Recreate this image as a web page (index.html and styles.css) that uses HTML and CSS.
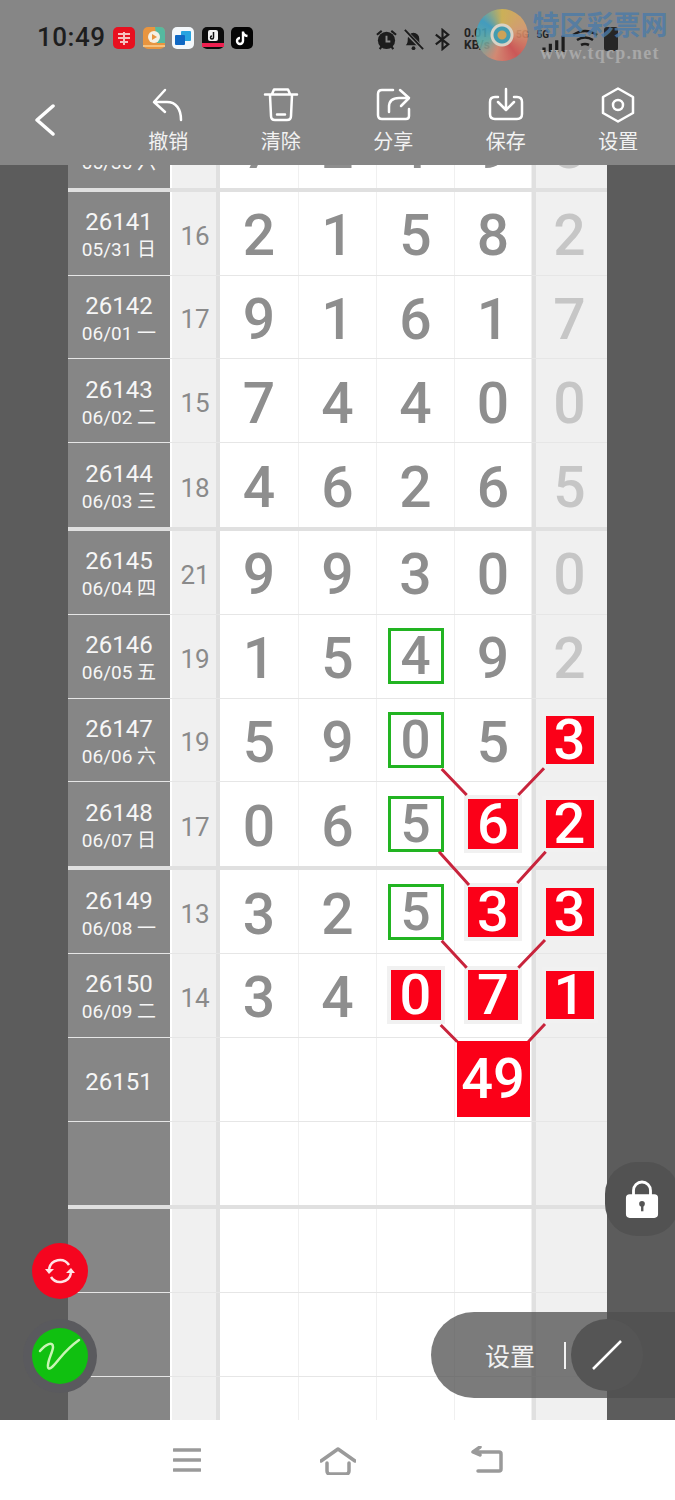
FILE: index.html
```html
<!DOCTYPE html>
<html>
<head>
    <title>排列五 走势图</title>
    <link rel="stylesheet" href="styles.css">
</head>
<body>
<div class="screen">
    <header class="top">
        <div class="status">
            <span class="time">10:49</span>
            <div class="apps">
                <svg class="app" viewBox="0 0 22 22"><rect width="22" height="22" rx="5" fill="#e8101f"/><path d="M5 7h12M5 11h12M7 15h8M11 5v13" stroke="#f6c0c0" stroke-width="2" fill="none"/></svg>
                <svg class="app" viewBox="0 0 22 22"><rect width="22" height="22" rx="5" fill="#e9953f"/><path d="M12 0h5q5 0 5 5v11h-8z" fill="#55b9a0"/><circle cx="11" cy="10" r="6" fill="#f6f0e4"/><path d="M9 7l5 3-5 3z" fill="#e9953f"/><rect y="18" width="22" height="2" fill="#f6c27e"/></svg>
                <svg class="app" viewBox="0 0 22 22"><rect width="22" height="22" rx="5" fill="#f4f8fb"/><rect x="9" y="4" width="10" height="10" rx="1" fill="#27a4e0"/><rect x="3" y="8" width="10" height="10" rx="1" fill="#0f68c4"/></svg>
                <svg class="app" viewBox="0 0 22 22"><rect width="22" height="22" rx="5" fill="#0c0c0c"/><rect x="6" y="3" width="10" height="11" rx="2" fill="#f2f2f2"/><path d="M11.500 5v5.500a1.500 1.500 0 1 1-1.500-1.500" stroke="#111" stroke-width="1.500" fill="none"/><rect y="16" width="22" height="4" fill="#ee2050"/></svg>
                <svg class="app" viewBox="0 0 22 22"><rect width="22" height="22" rx="5" fill="#050505"/><path d="M12 4.500v9.500a3 3 0 1 1-3-3M12 5q.500 3.500 4.500 4" stroke="#fff" stroke-width="2.400" fill="none"/></svg>
            </div>
            <div class="sys">
                <svg class="sys-icon" viewBox="0 0 24 24"><circle cx="12" cy="13" r="9" fill="#1c1c1c"/><path d="M12 8v6h4" stroke="#8a8a8a" stroke-width="2" fill="none"/><path d="M2 7l5-4M22 7l-5-4M5 22l2-3M19 22l-2-3" stroke="#1c1c1c" stroke-width="2.200"/></svg>
                <svg class="sys-icon" viewBox="0 0 24 24"><path d="M4 18c2-2 2-4 2-7a6 6 0 0 1 12 0c0 3 0 5 2 7z" fill="#1c1c1c"/><circle cx="12" cy="21" r="2" fill="#1c1c1c"/><path d="M3 3l18 18" stroke="#8a8a8a" stroke-width="4"/><path d="M3 2l19 20" stroke="#1c1c1c" stroke-width="2"/></svg>
                <svg class="sys-icon bt" viewBox="0 0 24 24"><path d="M5 7l13 10-6 5V2l6 5L5 17" stroke="#1c1c1c" stroke-width="2.200" fill="none"/></svg>
                <span class="speed">0.01<br>KB/s</span>
                <div class="signal"><span class="five-g">5G</span><span class="five-g">5G</span></div>
                <svg class="bars" viewBox="0 0 26 22"><path d="M2 22v-5M9 22v-9M16 22v-13M23 22V4" stroke="#1c1c1c" stroke-width="3.500"/></svg>
                <svg class="wifi" viewBox="0 0 26 20"><path d="M1 6q12-8 24 0M5 11q8-5 16 0M9 16q4-2 8 0" stroke="#1c1c1c" stroke-width="2.600" fill="none"/></svg>
                <span class="battery"></span>
            </div>
        </div>
        <nav class="toolbar">
            <svg class="back" viewBox="0 0 20 32"><path d="M18 2L2 16l16 14"/></svg>
            <div class="tools">
                <div class="tool">
                    <svg viewBox="0 0 36 36"><path d="M15 3L4 15l11 10M5 15h12c9 0 14 7 14 18"/></svg>
                    <span>撤销</span>
                </div>
                <div class="tool">
                    <svg viewBox="0 0 36 36"><path d="M2 7.500h32M9 7l2-4.500h14L27 7M7 8l1 21q0 4 4 4h12q4 0 4-4l1-21M14 27.500h8"/></svg>
                    <span>清除</span>
                </div>
                <div class="tool">
                    <svg viewBox="0 0 36 36"><path d="M18 3H7Q3 3 3 7v21q0 4 4 4h24q3 0 3-3v-7M14 25v-5q0-9 10-9h9M25 3l9 8-8 8"/></svg>
                    <span>分享</span>
                </div>
                <div class="tool">
                    <svg viewBox="0 0 36 36"><path d="M10 10H7q-5 0-5 5v12q0 5 5 5h22q5 0 5-5V15q0-5-5-5h-3M18 2v20M10 15l8 8 8-8"/></svg>
                    <span>保存</span>
                </div>
                <div class="tool">
                    <svg viewBox="0 0 36 36"><path d="M18 1.500L33 10v16l-15 8.500L3 26V10z"/><circle cx="18" cy="18" r="5"/></svg>
                    <span>设置</span>
                </div>
            </div>
        </nav>
        <div class="watermark">
            <span class="wm-logo"></span>
            <div class="wm-text">
                <span class="wm-name">特区彩票网</span>
                <span class="wm-url">www.tqcp.net</span>
            </div>
        </div>
    </header>

    <main class="viewport">
        <div class="chart">
            <div class="group partial">
                <div class="row">
                    <div class="date"><b>26140</b><span>05/30 六</span></div>
                    <div class="sum">19</div>
                    <div class="num">7</div><div class="num">2</div><div class="num">1</div><div class="num">9</div>
                    <div class="extra">3</div>
                </div>
            </div>
            <div class="group">
                <div class="row">
                    <div class="date"><b>26141</b><span>05/31 日</span></div>
                    <div class="sum">16</div>
                    <div class="num">2</div><div class="num">1</div><div class="num">5</div><div class="num">8</div>
                    <div class="extra">2</div>
                </div>
                <div class="row">
                    <div class="date"><b>26142</b><span>06/01 一</span></div>
                    <div class="sum">17</div>
                    <div class="num">9</div><div class="num">1</div><div class="num">6</div><div class="num">1</div>
                    <div class="extra">7</div>
                </div>
                <div class="row">
                    <div class="date"><b>26143</b><span>06/02 二</span></div>
                    <div class="sum">15</div>
                    <div class="num">7</div><div class="num">4</div><div class="num">4</div><div class="num">0</div>
                    <div class="extra">0</div>
                </div>
                <div class="row">
                    <div class="date"><b>26144</b><span>06/03 三</span></div>
                    <div class="sum">18</div>
                    <div class="num">4</div><div class="num">6</div><div class="num">2</div><div class="num">6</div>
                    <div class="extra">5</div>
                </div>
            </div>
            <div class="group">
                <div class="row">
                    <div class="date"><b>26145</b><span>06/04 四</span></div>
                    <div class="sum">21</div>
                    <div class="num">9</div><div class="num">9</div><div class="num">3</div><div class="num">0</div>
                    <div class="extra">0</div>
                </div>
                <div class="row">
                    <div class="date"><b>26146</b><span>06/05 五</span></div>
                    <div class="sum">19</div>
                    <div class="num">1</div><div class="num">5</div><div class="num"><i class="green">4</i></div><div class="num">9</div>
                    <div class="extra">2</div>
                </div>
                <div class="row">
                    <div class="date"><b>26147</b><span>06/06 六</span></div>
                    <div class="sum">19</div>
                    <div class="num">5</div><div class="num">9</div><div class="num"><i class="green">0</i></div><div class="num">5</div>
                    <div class="extra"><i class="red thin">3</i></div>
                </div>
                <div class="row">
                    <div class="date"><b>26148</b><span>06/07 日</span></div>
                    <div class="sum">17</div>
                    <div class="num">0</div><div class="num">6</div><div class="num"><i class="green">5</i></div><div class="num"><i class="red">6</i></div>
                    <div class="extra"><i class="red thin">2</i></div>
                </div>
            </div>
            <div class="group">
                <div class="row">
                    <div class="date"><b>26149</b><span>06/08 一</span></div>
                    <div class="sum">13</div>
                    <div class="num">3</div><div class="num">2</div><div class="num"><i class="green">5</i></div><div class="num"><i class="red">3</i></div>
                    <div class="extra"><i class="red thin">3</i></div>
                </div>
                <div class="row">
                    <div class="date"><b>26150</b><span>06/09 二</span></div>
                    <div class="sum">14</div>
                    <div class="num">3</div><div class="num">4</div><div class="num"><i class="red">0</i></div><div class="num"><i class="red">7</i></div>
                    <div class="extra"><i class="red thin">1</i></div>
                </div>
                <div class="row">
                    <div class="date"><b>26151</b></div>
                    <div class="sum"></div>
                    <div class="num"></div><div class="num"></div><div class="num"></div><div class="num"><i class="red total">49</i></div>
                    <div class="extra"></div>
                </div>
                <div class="row">
                    <div class="date"></div>
                    <div class="sum"></div>
                    <div class="num"></div><div class="num"></div><div class="num"></div><div class="num"></div>
                    <div class="extra"></div>
                </div>
            </div>
            <div class="group">
                <div class="row">
                    <div class="date"></div>
                    <div class="sum"></div>
                    <div class="num"></div><div class="num"></div><div class="num"></div><div class="num"></div>
                    <div class="extra"></div>
                </div>
                <div class="row">
                    <div class="date"></div>
                    <div class="sum"></div>
                    <div class="num"></div><div class="num"></div><div class="num"></div><div class="num"></div>
                    <div class="extra"></div>
                </div>
                <div class="row">
                    <div class="date"></div>
                    <div class="sum"></div>
                    <div class="num"></div><div class="num"></div><div class="num"></div><div class="num"></div>
                    <div class="extra"></div>
                </div>
            </div>
        </div>

        <!-- lines between the red boxes, in viewport coordinates -->
        <svg class="links" viewBox="0 0 675 1255">
            <path d="M441.700 604L466.700 630M544 603.300L518.300 630M439 686.700L469 720M545.700 686.700L517.300 718M441.700 775.700L466.700 802.700M545 775L518.300 802.700M440.700 860L457.300 876.700M545 859L528.300 876.700"/>
        </svg>

        <div class="lock">
            <svg viewBox="0 0 36 42"><path d="M9 18V12a9 9 0 0 1 18 0v6" fill="none" stroke="#fff" stroke-width="3"/><rect x="1" y="16" width="34" height="25" rx="4" fill="#fff"/><circle cx="18" cy="26" r="3" fill="#555"/><rect x="17" y="27" width="2.500" height="7" fill="#555"/></svg>
        </div>
        <div class="fab refresh">
            <svg viewBox="0 0 32 32"><path d="M5 14a11 11 0 0 1 20-4M27 18a11 11 0 0 1-20 4" fill="none" stroke="#ffe4e6" stroke-width="2.500"/><path d="M1 14h9l-5 5zM31 18h-9l5-5z" fill="#ffe4e6"/></svg>
        </div>
        <div class="fab pen">
            <svg viewBox="0 0 44 36"><path d="M2 13C8 6 15 3 15 9c0 5-6 14-5 20 1 5 8-4 12-9 5-6 12-13 19-18" fill="none" stroke="#c8f5b4" stroke-width="2.500" stroke-linecap="round"/></svg>
        </div>
        <div class="pill">
            <span class="pill-label">设置</span>
            <span class="pill-bar"></span>
            <span class="pill-knob">
                <svg viewBox="0 0 30 30"><path d="M1 29L29 1" stroke="#fff" stroke-width="2.500"/></svg>
            </span>
        </div>
    </main>

    <footer class="nav">
        <svg class="nav-menu" viewBox="0 0 28 26"><path d="M1 3h26M1 13h26M1 23h26"/></svg>
        <svg class="nav-home" viewBox="0 0 36 28"><path d="M1 14L18 2l17 12M7 16v8q0 3 3 3h16q3 0 3-3v-8"/></svg>
        <svg class="nav-back" viewBox="0 0 32 28"><path d="M2 6h26q2 0 2 2v15q0 2-2 2H7M9 1L2 6l7 3"/></svg>
    </footer>
</div>
</body>
</html>
```
FILE: styles.css
```css
* {
    box-sizing: border-box;
}
body {
    margin: 0;
    background: #ffffff;
    font-family: Roboto, "Noto Sans CJK SC", sans-serif;
}
.screen {
    width: 675px;
    height: 1500px;
    overflow: hidden;
    display: flex;
    flex-direction: column;
}

/* status bar + toolbar */
.top {
    position: relative;
    height: 165px;
    background: #868686;
    flex: none;
}
.status {
    height: 75px;
    padding: 22px 0 0 37px;
    display: flex;
    align-items: flex-start;
}
.time {
    font-size: 26px;
    font-weight: 500;
    line-height: 30px;
    letter-spacing: 0.5px;
    color: #1e1e1e;
    width: 76px;
}
.apps {
    display: flex;
    gap: 7.500px;
    margin-top: 5px;
}
.app {
    width: 22px;
    height: 22px;
}
.sys {
    margin-left: 122px;
    margin-top: 3px;
    display: flex;
    align-items: center;
    height: 28px;
    gap: 4px;
}
.sys-icon {
    width: 23px;
    height: 23px;
}
.bt {
    margin-left: 2px;
}
.speed {
    width: 36px;
    margin-left: 6px;
    font-size: 12px;
    line-height: 12px;
    font-weight: 700;
    color: #222222;
}
.signal {
    width: 24px;
    margin-left: 12px;
    margin-top: -10px;
    display: flex;
    gap: 8px;
}
.five-g {
    font-size: 10px;
    font-weight: 700;
    color: #222222;
}
.bars {
    width: 24px;
    height: 20px;
    margin: 6px 0 0 -2px;
}
.wifi {
    width: 26px;
    height: 20px;
    margin-left: 2px;
}
.battery {
    width: 14px;
    height: 24px;
    margin-left: 2px;
    border-radius: 3px;
    background: #262626;
}
.toolbar {
    height: 90px;
    position: relative;
    display: flex;
}
.back {
    position: absolute;
    left: 35px;
    top: 29px;
    width: 20px;
    height: 32px;
    fill: none;
    stroke: #ffffff;
    stroke-width: 3.500;
    stroke-linecap: round;
    stroke-linejoin: round;
}
.tools {
    margin-left: 112px;
    display: flex;
}
.tool {
    width: 112.500px;
    padding-top: 12px;
    display: flex;
    flex-direction: column;
    align-items: center;
    color: #f2f2f2;
    font-size: 20px;
    line-height: 28px;
}
.tool svg {
    width: 36px;
    height: 36px;
    fill: none;
    stroke: #ffffff;
    stroke-width: 2.500;
    stroke-linecap: round;
    stroke-linejoin: round;
}
.tool span {
    margin-top: 5px;
}
.watermark {
    position: absolute;
    left: 476px;
    top: 9px;
    display: flex;
    gap: 3px;
}
.wm-logo {
    width: 52px;
    height: 52px;
    border-radius: 50%;
    opacity: 0.85;
    background:
        radial-gradient(circle, #d8a850 0 4px, #38a0b8 5px 8px, #e8e0d0 9px 11px, transparent 12px),
        conic-gradient(#d8b850, #e0a070 20%, #d85050 40%, #e08a70 55%, #60b0a8 70%, #38a0c8 85%, #d8b850);
}
.wm-text {
    display: flex;
    flex-direction: column;
    align-items: center;
    width: 138px;
}
.wm-name {
    font-size: 27px;
    line-height: 34px;
    font-weight: 700;
    color: #4c7ca8;
    opacity: 0.8;
}
.wm-url {
    font-family: "Liberation Serif", serif;
    font-size: 18px;
    line-height: 20px;
    font-weight: 700;
    letter-spacing: 1.200px;
    color: #a8a8a8;
}

/* chart */
.viewport {
    position: relative;
    flex: 1;
    overflow: hidden;
    background: #5c5c5c;
}
.chart {
    width: 539px;
    margin: 0 auto;
    background: #ffffff;
}
.group {
    border-bottom: 4px solid #e0e0e0;
}
.partial {
    margin-top: -61px;
}
.row {
    height: 83.800px;
    display: grid;
    grid-template-columns: 102px 50px 79px 78px 78px 77px 75px;
    border-bottom: 1px solid #e6e6e6;
}
.group .row:last-child {
    border-bottom: none;
}
.date {
    background: #868686;
    color: #f6f6f6;
    display: flex;
    flex-direction: column;
    justify-content: center;
    align-items: center;
    padding-top: 6px;
}
.date b {
    font-weight: 400;
    font-size: 24px;
    line-height: 28px;
}
.date span {
    font-size: 19px;
    font-weight: 400;
    line-height: 28px;
}
.sum {
    background: #f0f0f0;
    border-left: 2px solid #ffffff;
    box-shadow: inset -4px 0 0 #e0e0e0;
    color: #8a8a8a;
    font-size: 26px;
    font-weight: 400;
    display: flex;
    align-items: center;
    justify-content: center;
    padding: 5px 2px 0 0;
}
.num, .extra {
    font-size: 57px;
    font-weight: 500;
    display: flex;
    align-items: center;
    justify-content: center;
    padding-top: 5px;
    color: #8e8e8e;
}
.num {
    border-right: 1px solid #f0f0f0;
}
.extra {
    background: #f0f0f0;
    box-shadow: inset 4px 0 0 #e0e0e0;
    color: #c6c6c6;
}
.green, .red {
    font-style: normal;
    display: flex;
    align-items: center;
    justify-content: center;
    margin-top: -5px;
}
.green {
    width: 56px;
    height: 56px;
    border: 3px solid #22b422;
    font-size: 53px;
}
.red {
    width: 50px;
    height: 50px;
    background: #fb0018;
    color: #ffffff;
    font-size: 56px;
    box-shadow: 0 0 0 4px #f1f1f1;
    position: relative;
}
.thin {
    width: 48px;
    height: 48px;
}
.total {
    width: 73px;
    height: 76px;
    flex: none;
    box-shadow: none;
    z-index: 2;
}

/* overlays */
.links {
    position: absolute;
    left: 0;
    top: 0;
    width: 675px;
    height: 1255px;
    fill: none;
    stroke: #c8243c;
    stroke-width: 3;
}
.lock {
    position: absolute;
    left: 605px;
    top: 997px;
    width: 74px;
    height: 74px;
    border-radius: 32px;
    background: #525252;
    display: flex;
    align-items: center;
    justify-content: center;
}
.lock svg {
    width: 34px;
    height: 40px;
}
.fab {
    position: absolute;
    left: 32px;
    width: 56px;
    height: 56px;
    border-radius: 50%;
    display: flex;
    align-items: center;
    justify-content: center;
}
.refresh {
    top: 1078px;
    background: #f5051f;
}
.refresh svg {
    width: 32px;
    height: 32px;
}
.pen {
    top: 1163px;
    background: #10c010;
    box-shadow: 0 0 0 9px #5a5a5e;
}
.pen svg {
    width: 44px;
    height: 36px;
}
.pill {
    position: absolute;
    left: 431px;
    top: 1147px;
    width: 244px;
    height: 86px;
    border-radius: 43px 0 0 43px;
    background: rgba(79, 79, 79, 0.75);
    display: flex;
    align-items: center;
}
.pill-label {
    margin-left: 54px;
    width: 79px;
    font-size: 25px;
    color: #f2f2f2;
}
.pill-bar {
    width: 2px;
    height: 27px;
    background: #f2f2f2;
}
.pill-knob {
    width: 72px;
    height: 72px;
    margin-left: 5px;
    border-radius: 50%;
    background: #555555;
    display: flex;
    align-items: center;
    justify-content: center;
}
.pill-knob svg {
    width: 30px;
    height: 30px;
}

/* bottom nav */
.nav {
    height: 80px;
    flex: none;
    background: #ffffff;
    position: relative;
    display: flex;
    align-items: center;
    padding: 0 0 0 173px;
}
.nav svg {
    fill: none;
    stroke: #9a9a9a;
    stroke-width: 3.500;
    stroke-linecap: round;
    stroke-linejoin: round;
}
.nav-menu {
    width: 28px;
    height: 26px;
}
.nav-home {
    width: 36px;
    height: 28px;
    margin: 2px 0 0 119px;
}
.nav-back {
    width: 32px;
    height: 28px;
    margin-left: 115px;
}
```
